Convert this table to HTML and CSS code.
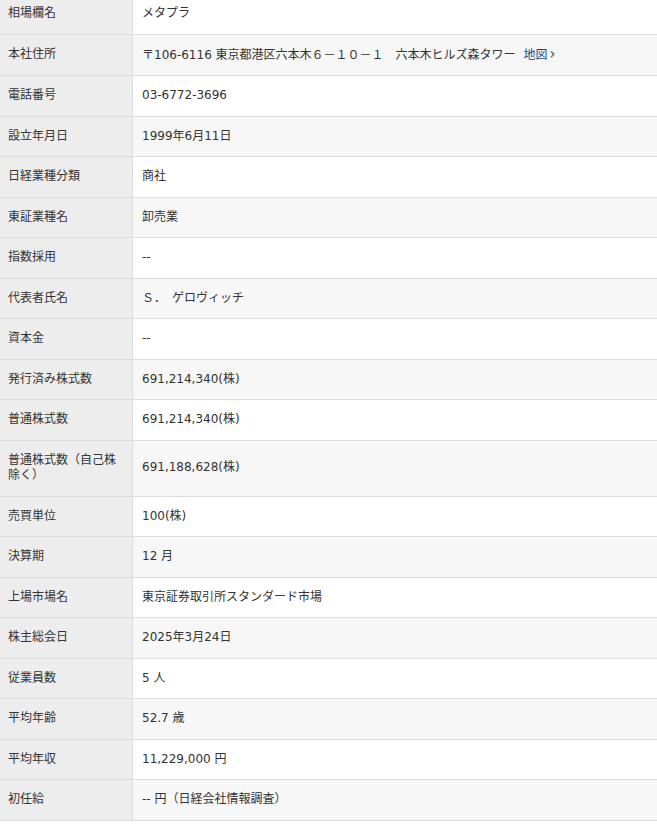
FILE: index.html
```html
<!DOCTYPE html>
<html lang="ja">
<head>
<meta charset="utf-8">
<link rel="stylesheet" href="styles.css">
</head>
<body>
<table class="info">
<tbody>
<tr><th>相場欄名</th><td>メタプラ</td></tr>
<tr><th>本社住所</th><td>〒106-6116 東京都港区六本木６－１０－１　六本木ヒルズ森タワー <a class="map" href="#">地図<span class="chev">›</span></a></td></tr>
<tr><th>電話番号</th><td>03-6772-3696</td></tr>
<tr><th>設立年月日</th><td>1999年6月11日</td></tr>
<tr><th>日経業種分類</th><td>商社</td></tr>
<tr><th>東証業種名</th><td>卸売業</td></tr>
<tr><th>指数採用</th><td>--</td></tr>
<tr><th>代表者氏名</th><td>Ｓ．　ゲロヴィッチ</td></tr>
<tr><th>資本金</th><td>--</td></tr>
<tr><th>発行済み株式数</th><td>691,214,340(株)</td></tr>
<tr><th>普通株式数</th><td>691,214,340(株)</td></tr>
<tr><th>普通株式数（自己株除く）</th><td>691,188,628(株)</td></tr>
<tr><th>売買単位</th><td>100(株)</td></tr>
<tr><th>決算期</th><td>12 月</td></tr>
<tr><th>上場市場名</th><td>東京証券取引所スタンダード市場</td></tr>
<tr><th>株主総会日</th><td>2025年3月24日</td></tr>
<tr><th>従業員数</th><td>5 人</td></tr>
<tr><th>平均年齢</th><td>52.7 歳</td></tr>
<tr><th>平均年収</th><td>11,229,000 円</td></tr>
<tr><th>初任給</th><td>-- 円（日経会社情報調査）</td></tr>
</tbody>
</table>
</body>
</html>
```
FILE: styles.css
```css
html, body {
  margin: 0;
  padding: 0;
  background: #fff;
}
body {
  font-family: "DejaVu Sans", "Noto Sans CJK JP", sans-serif;
  font-size: 12px;
  color: #333;
}
.info {
  width: 657px;
  border-collapse: collapse;
  margin-top: -7px;
  table-layout: fixed;
}
.info th, .info td {
  border: 1px solid #dddddd;
  padding: 12px 8px 12px 9px;
  line-height: 15.5px;
  text-align: left;
  font-weight: normal;
  vertical-align: middle;
}
.info th {
  width: 116px;
  background: #ededed;
  padding-left: 8px;
}
.info tr:nth-child(odd) td {
  background: #ffffff;
}
.info tr:nth-child(even) td {
  background: #f7f7f7;
}
.info th { border-left: none; }
.info td { border-right: none; }
.map {
  color: #1d4a86;
  text-decoration: none;
  margin-left: 4px;
}
.chev {
  color: #444;
  font-size: 15px;
  margin-left: 2px;
}
```
